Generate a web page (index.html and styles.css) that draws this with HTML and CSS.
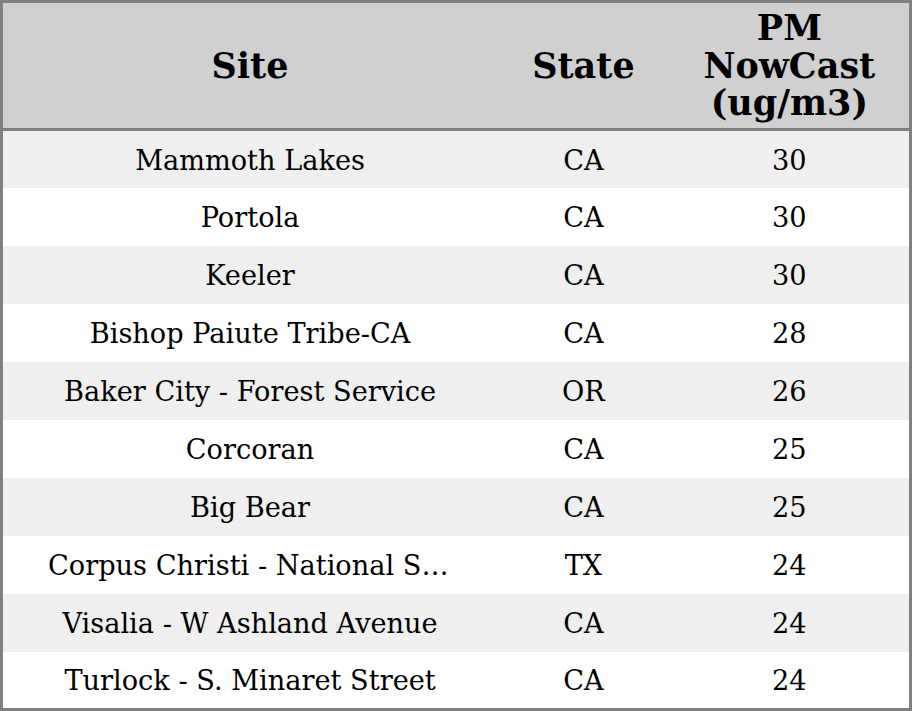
FILE: index.html
```html
<!DOCTYPE html>
<html>
<head>
<meta charset="utf-8">
<link rel="stylesheet" href="styles.css">
</head>
<body>
<table class="aq">
  <colgroup>
    <col class="c-site">
    <col class="c-state">
    <col class="c-pm">
  </colgroup>
  <thead>
    <tr><th>Site</th><th>State</th><th>PM NowCast (ug/m3)</th></tr>
  </thead>
  <tbody>
    <tr><td>Mammoth Lakes</td><td>CA</td><td>30</td></tr>
    <tr><td>Portola</td><td>CA</td><td>30</td></tr>
    <tr><td>Keeler</td><td>CA</td><td>30</td></tr>
    <tr><td>Bishop Paiute Tribe-CA</td><td>CA</td><td>28</td></tr>
    <tr><td>Baker City - Forest Service</td><td>OR</td><td>26</td></tr>
    <tr><td>Corcoran</td><td>CA</td><td>25</td></tr>
    <tr><td>Big Bear</td><td>CA</td><td>25</td></tr>
    <tr><td>Corpus Christi - National Seashore</td><td>TX</td><td>24</td></tr>
    <tr><td>Visalia - W Ashland Avenue</td><td>CA</td><td>24</td></tr>
    <tr><td>Turlock - S. Minaret Street</td><td>CA</td><td>24</td></tr>
  </tbody>
</table>
</body>
</html>
```

FILE: styles.css
```css
html, body {
  margin: 0;
  padding: 0;
  background: #ffffff;
}

.aq {
  width: 912px;
  border-collapse: collapse;
  table-layout: fixed;
  border: 3px solid #808080;
  font-family: "DejaVu Serif", serif;
  color: #000;
}

.c-site { width: 494px; }
.c-state { width: 172px; }
.c-pm { width: 240px; }

.aq th {
  background: #d0d0d0;
  font-size: 35px;
  line-height: 37.5px;
  font-weight: bold;
  height: 128px;
  padding: 0 20px;
  text-align: center;
  vertical-align: middle;
  border-bottom: 3px solid #808080;
  box-sizing: border-box;
}

.aq td {
  font-size: 27.2px;
  height: 58px;
  padding: 2px 45px 0;
  text-align: center;
  vertical-align: middle;
  white-space: nowrap;
  overflow: hidden;
  text-overflow: ellipsis;
  box-sizing: border-box;
}

.aq tbody tr:nth-child(odd) td {
  background: #efefef;
}
```
